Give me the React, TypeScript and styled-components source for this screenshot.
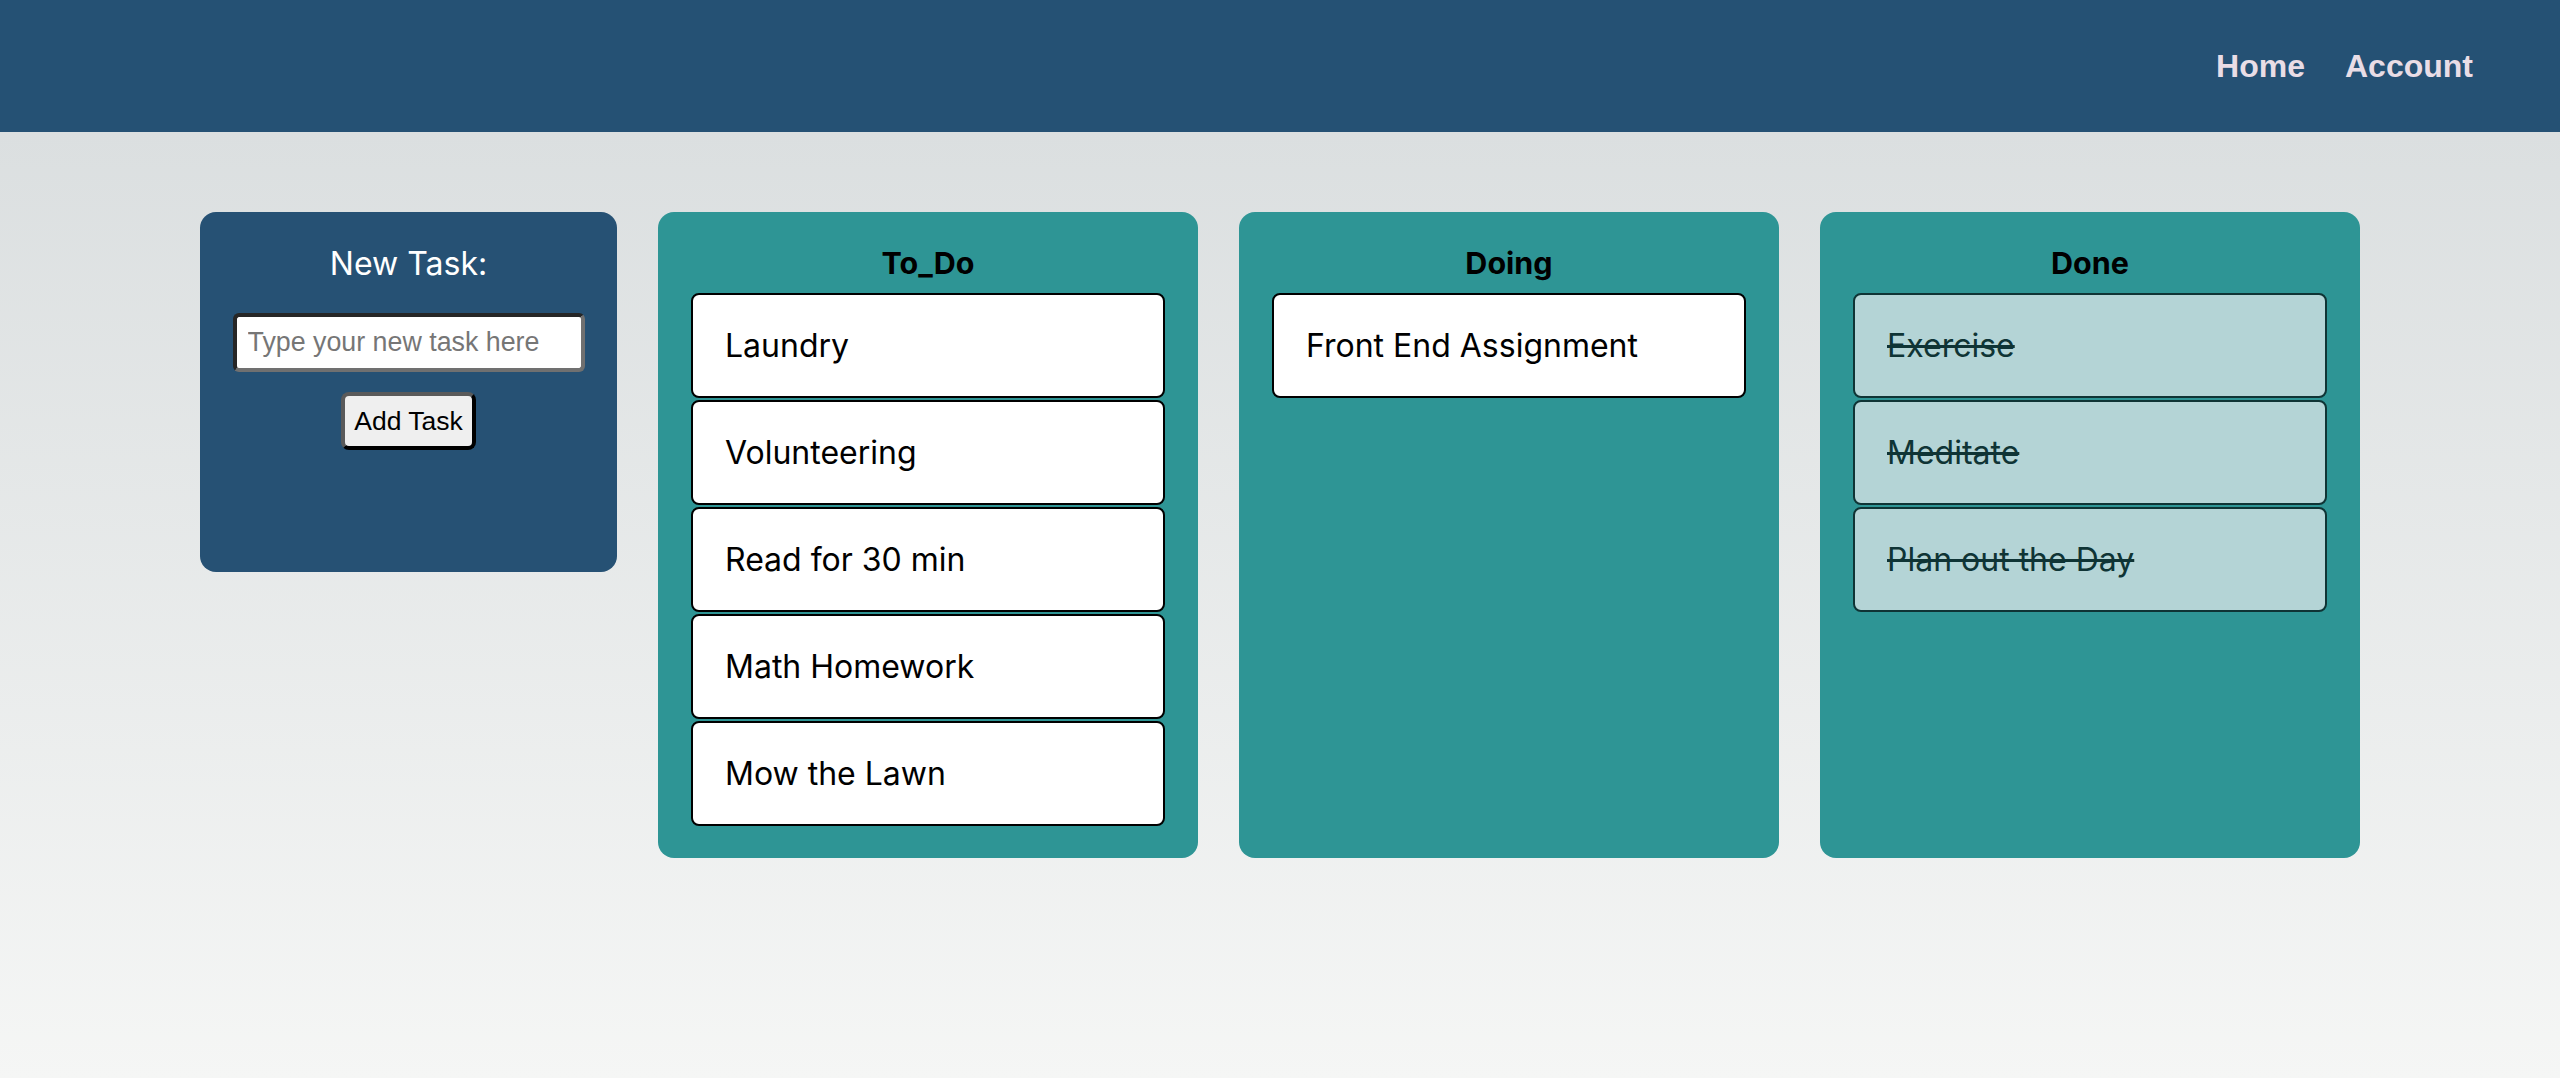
import React from "react";
import styled, { createGlobalStyle } from "styled-components";

const GlobalStyle = createGlobalStyle`
  html, body {
    margin: 0;
    padding: 0;
  }
  body {
    font-family: Inter, "Noto Sans", sans-serif;
    background: #f5f6f5;
  }
  * {
    box-sizing: border-box;
  }
`;

const Page = styled.div`
  min-height: 100vh;
  display: flex;
  flex-direction: column;
`;

const Header = styled.header`
  height: 132px;
  background: #255174;
  display: flex;
  justify-content: flex-end;
  align-items: center;
  gap: 40px;
  padding: 0 87px 0 0;
`;

const NavLink = styled.a`
  font-family: "Liberation Sans", Arial, sans-serif;
  font-weight: 700;
  font-size: 32px;
  color: #e9dde6;
  text-decoration: none;
  cursor: pointer;
`;

const Main = styled.main`
  flex: 1;
  background: linear-gradient(180deg, #dbdfe0 0%, #f5f6f5 100%);
  display: flex;
  justify-content: center;
  align-items: flex-start;
  gap: 41px;
  padding-top: 80px;
`;

const NewTaskCard = styled.section`
  width: 417px;
  height: 360px;
  background: #265174;
  border-radius: 16px;
  padding: 32px;
  display: flex;
  flex-direction: column;
  align-items: center;
`;

const NewTaskTitle = styled.h2`
  margin: 0 0 30px;
  font-family: Inter, sans-serif;
  font-weight: 400;
  font-size: 32px;
  line-height: normal;
  color: #ffffff;
`;

const TaskInput = styled.input`
  width: 352px;
  height: 59px;
  margin: 0 0 20px;
  padding: 0 11px;
  font-family: "Liberation Sans", Arial, sans-serif;
  font-size: 26.8px;
  color: #000;
  background: #fff;
  border: 4px solid;
  border-color: #262626 #707070 #707070 #262626;
  border-radius: 6px;
  outline: none;
  &::placeholder {
    color: #767676;
  }
`;

const AddButton = styled.button`
  width: 135px;
  height: 58px;
  padding: 0;
  font-family: "Liberation Sans", Arial, sans-serif;
  font-size: 26.5px;
  color: #000;
  background: #efefef;
  border: 4px solid;
  border-color: #5a5a5a #000 #000 #5a5a5a;
  border-radius: 8px;
  cursor: pointer;
`;

const Board = styled.div`
  display: flex;
  gap: 41px;
  align-items: stretch;
`;

const Column = styled.section`
  width: 540px;
  background: #2e9595;
  border-radius: 16px;
  padding: 32px 33px 32px 33px;
  display: flex;
  flex-direction: column;
  gap: 2px;
`;

const ColumnTitle = styled.h2`
  margin: 0 0 10px;
  font-family: Inter, sans-serif;
  font-weight: 700;
  font-size: 30.5px;
  line-height: normal;
  text-align: center;
  color: #000;
`;

const TaskCard = styled.div<{ $done?: boolean }>`
  padding: 31px 32px;
  font-family: Inter, sans-serif;
  font-size: 32px;
  line-height: 39px;
  border-radius: 8px;
  border: 2px solid ${(p) => (p.$done ? "#0f3435" : "#000")};
  background: ${(p) => (p.$done ? "#b4d4d6" : "#ffffff")};
  color: ${(p) => (p.$done ? "#0f3435" : "#000")};
  text-decoration: ${(p) => (p.$done ? "line-through" : "none")};
`;

type ColumnData = { title: string; tasks: string[]; done?: boolean };

const columns: ColumnData[] = [
  {
    title: "To_Do",
    tasks: ["Laundry", "Volunteering", "Read for 30 min", "Math Homework", "Mow the Lawn"],
  },
  { title: "Doing", tasks: ["Front End Assignment"] },
  { title: "Done", tasks: ["Exercise", "Meditate", "Plan out the Day"], done: true },
];

export default function App() {
  return (
    <>
      <GlobalStyle />
      <Page>
        <Header>
          <NavLink>Home</NavLink>
          <NavLink>Account</NavLink>
        </Header>
        <Main>
          <NewTaskCard>
            <NewTaskTitle>New Task:</NewTaskTitle>
            <TaskInput type="text" placeholder="Type your new task here" />
            <AddButton type="button">Add Task</AddButton>
          </NewTaskCard>
          <Board>
            {columns.map((col) => (
              <Column key={col.title}>
                <ColumnTitle>{col.title}</ColumnTitle>
                {col.tasks.map((t) => (
                  <TaskCard key={t} $done={col.done}>
                    {t}
                  </TaskCard>
                ))}
              </Column>
            ))}
          </Board>
        </Main>
      </Page>
    </>
  );
}
